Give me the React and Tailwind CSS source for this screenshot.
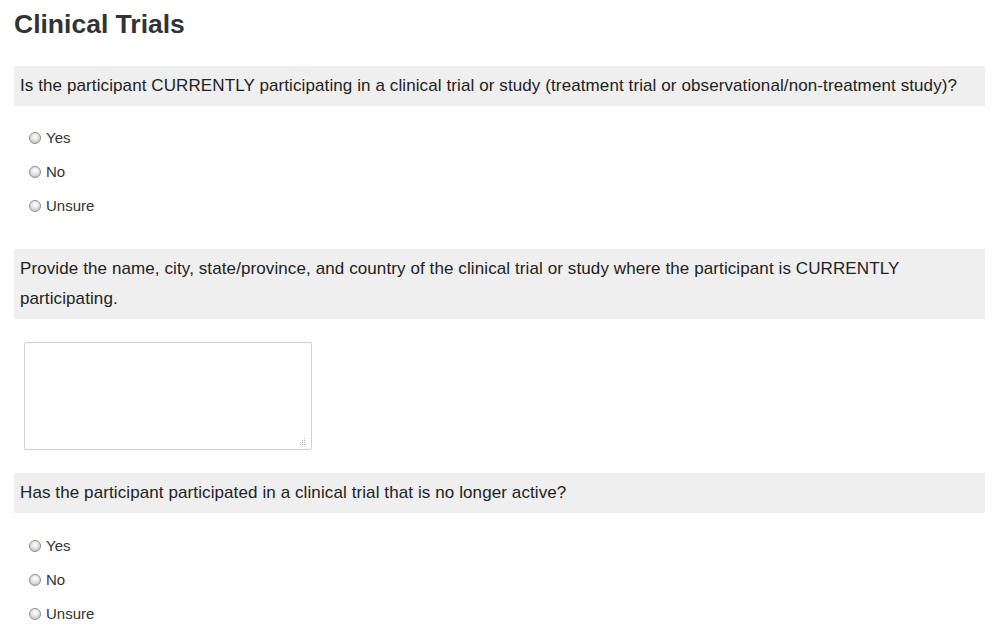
import { useState } from "react";

const options = ["Yes", "No", "Unsure"];

function Radio({ name, value, checked, onChange }) {
    return (
        <label className="flex items-center h-[34px] pl-[15px] cursor-pointer text-[#333] text-[15px]">
            <input
                type="radio"
                name={name}
                value={value}
                checked={checked}
                onChange={onChange}
                className="appearance-none w-[12px] h-[12px] rounded-full border border-[#8f8f8f] bg-[radial-gradient(circle_at_50%_35%,#ffffff_0%,#e4e4e4_45%,#b8b8b8_100%)] mr-[5px] checked:bg-[radial-gradient(circle,#333_0%,#333_35%,#e6e6e6_45%,#cfcfcf_100%)]"
            />
            <span>{value}</span>
        </label>
    );
}

function Question({ children }) {
    return (
        <div className="bg-[#efefef] px-[6px] pt-[5px] pb-[5px] leading-[30px] text-[17px] tracking-[0.1px] text-[#222]">
            {children}
        </div>
    );
}

export default function App() {
    const [current, setCurrent] = useState("");
    const [past, setPast] = useState("");
    const [details, setDetails] = useState("");

    return (
        <div className="bg-white min-h-[634px] px-[14px] pr-[15px] pt-[7px] font-['Liberation_Sans',Arial,sans-serif]">
            <h2 className="text-[26.5px] font-bold text-[#333] leading-[34px] mb-[25px]">Clinical Trials</h2>

            <Question>
                Is the participant CURRENTLY participating in a clinical trial or study (treatment trial or observational/non-treatment study)?
            </Question>
            <div className="pt-[15px] pb-[26px]">
                {options.map(o => (
                    <Radio key={o} name="current" value={o} checked={current === o} onChange={() => setCurrent(o)} />
                ))}
            </div>

            <Question>
                Provide the name, city, state/province, and country of the clinical trial or study where the participant is CURRENTLY participating.
            </Question>
            <div className="pt-[23px] pb-[23px] pl-[10px]">
                <div className="relative w-[288px] h-[108px]">
                    <textarea
                        className="block w-full h-full resize-none border border-[#d0d0d0] rounded-[2px] outline-none p-1 text-[15px]"
                        value={details}
                        onChange={e => setDetails(e.target.value)}
                    />
                    <svg className="absolute right-[6px] bottom-[5px]" width="7" height="7" viewBox="0 0 7 7">
                        <rect x="5" y="0" width="1" height="1" fill="#b5b5b5" />
                        <rect x="5" y="2" width="1" height="1" fill="#b5b5b5" />
                        <rect x="3" y="2" width="1" height="1" fill="#b5b5b5" />
                        <rect x="5" y="4" width="1" height="1" fill="#b5b5b5" />
                        <rect x="3" y="4" width="1" height="1" fill="#b5b5b5" />
                        <rect x="1" y="4" width="1" height="1" fill="#b5b5b5" />
                        <rect x="5" y="6" width="1" height="1" fill="#b5b5b5" />
                        <rect x="3" y="6" width="1" height="1" fill="#b5b5b5" />
                        <rect x="1" y="6" width="1" height="1" fill="#b5b5b5" />
                    </svg>
                </div>
            </div>

            <Question>
                Has the participant participated in a clinical trial that is no longer active?
            </Question>
            <div className="pt-[16px]">
                {options.map(o => (
                    <Radio key={o} name="past" value={o} checked={past === o} onChange={() => setPast(o)} />
                ))}
            </div>
        </div>
    );
}
